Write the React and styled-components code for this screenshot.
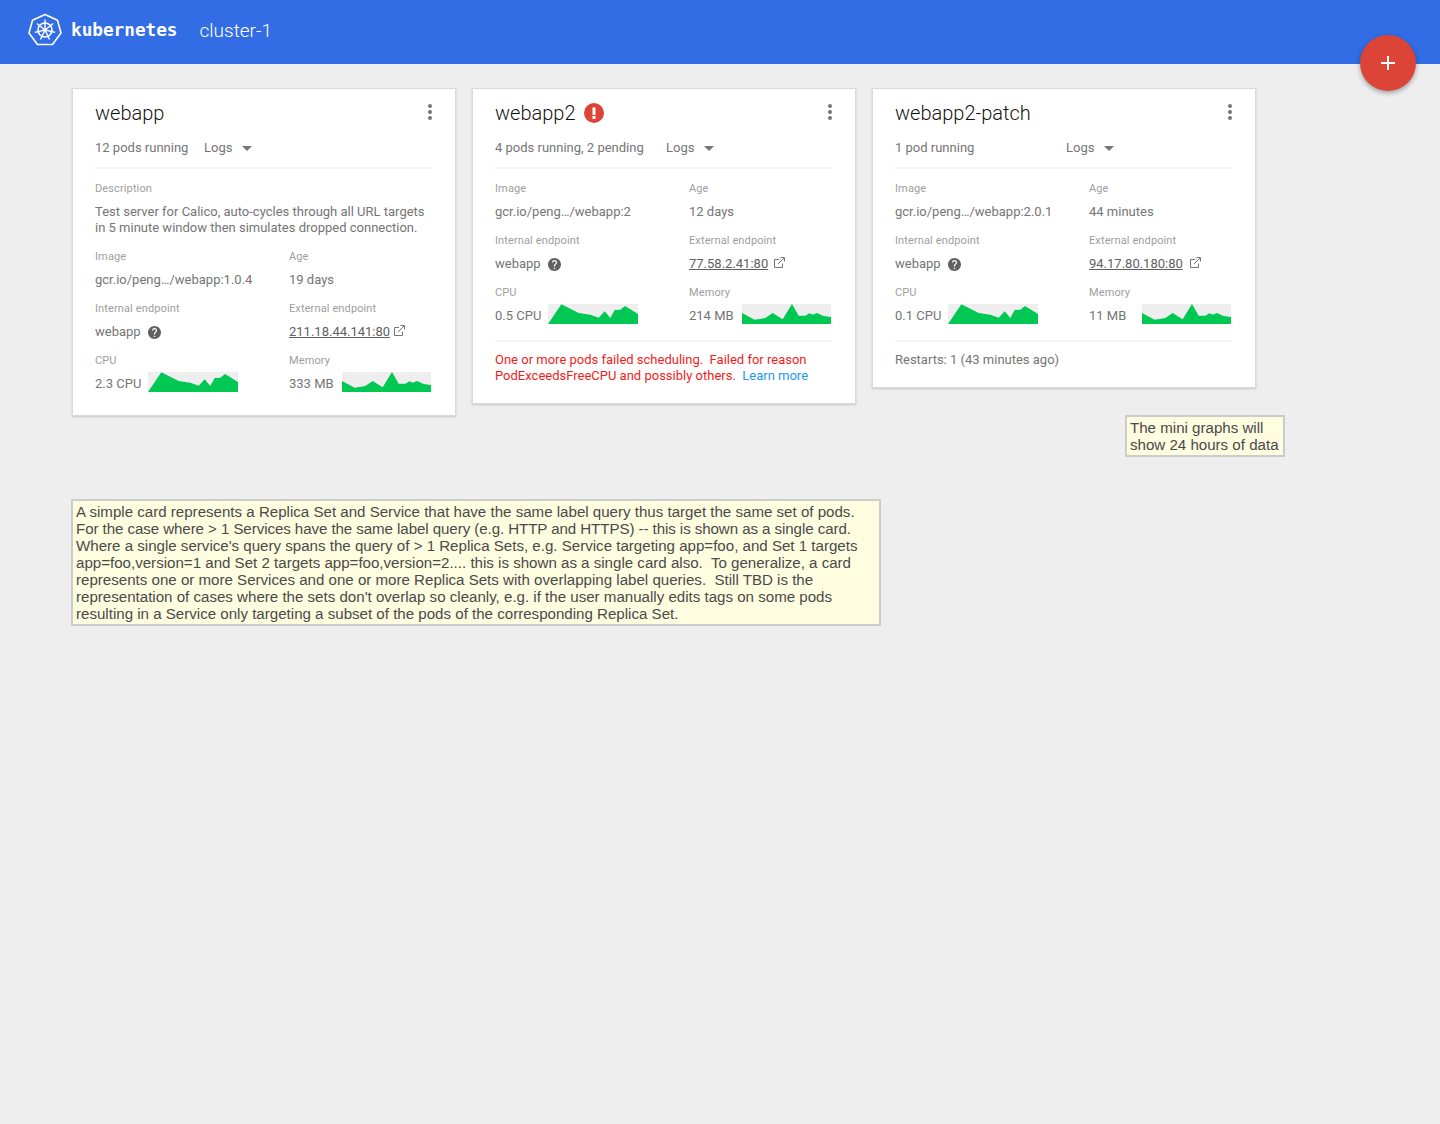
import React from "react";
import styled, { createGlobalStyle } from "styled-components";

const Global = createGlobalStyle`
  html, body { margin: 0; padding: 0; background: #eeeeee; }
  body { font-family: Roboto, "Liberation Sans", sans-serif; min-height: 1124px; }
`;

const Page = styled.div`
  position: relative;
  min-height: 1124px;
  background: #eeeeee;
`;

const TopBar = styled.header`
  box-sizing: border-box;
  height: 64px;
  background: #326de6;
  display: flex;
  align-items: center;
  padding: 0 0 4px 27px;
  color: #fff;
`;

const Brand = styled.div`
  display: flex;
  align-items: center;
  gap: 8px;
  margin-right: 22px;
  font-family: "DejaVu Sans Mono", monospace;
  font-weight: 700;
  font-size: 17.7px;
`;

const ClusterName = styled.div`
  font-size: 19px;
  font-weight: 300;
`;

const Fab = styled.button`
  position: absolute;
  top: 35px;
  left: 1360px;
  width: 56px;
  height: 56px;
  border: 0;
  padding: 0;
  border-radius: 50%;
  background: #db4437;
  box-shadow: 0 2px 5px rgba(0, 0, 0, 0.35);
  display: flex;
  align-items: center;
  justify-content: center;
`;

const Main = styled.main`
  padding: 24px 72px 0;
  display: flex;
  flex-direction: column;
  align-items: flex-start;
`;

const CardRow = styled.div`
  display: flex;
  align-items: flex-start;
  gap: 16px;
`;

const Card = styled.section`
  box-sizing: border-box;
  width: 384px;
  padding: 10px 23px ${(p) => p.$bottom}px 22px;
  background: #fff;
  border: 1px solid #dadada;
  box-shadow: 0 1px 2px rgba(0, 0, 0, 0.18);
`;

const TitleRow = styled.div`
  height: 28px;
  display: flex;
  align-items: center;
  justify-content: space-between;
`;

const TitleGroup = styled.div`
  display: flex;
  align-items: center;
  gap: 8px;
`;

const Title = styled.h2`
  margin: 0;
  font-size: 20px;
  font-weight: 300;
  color: rgba(0, 0, 0, 0.95);
`;

const Kebab = styled.svg`
  display: block;
  width: 4px;
  height: 16px;
  margin-bottom: 2px;
  fill: #757575;
`;

const StatusRow = styled.div`
  display: flex;
  align-items: center;
  height: 16px;
  margin-top: 13px;
  font-size: 13px;
  line-height: 16px;
  color: #757575;
`;

const Status = styled.span`
  width: ${(p) => p.$width}px;
  flex: none;
`;

const Arrow = styled.span`
  width: 0;
  height: 0;
  margin-left: 10px;
  border-left: 5px solid transparent;
  border-right: 5px solid transparent;
  border-top: 5px solid #757575;
`;

const Rule = styled.hr`
  margin: ${(p) => p.$top}px 0 ${(p) => p.$bottom}px;
  border: 0;
  height: 2px;
  background: #f5f5f5;
`;

const Field = styled.div`
  margin-bottom: 13px;
`;

const Grid = styled.div`
  display: grid;
  grid-template-columns: 194px 1fr;
  row-gap: 13px;
`;

const Label = styled.div`
  font-size: 11px;
  line-height: 16px;
  letter-spacing: 0.12px;
  margin-bottom: ${(p) => p.$gap ?? 7}px;
  color: #9e9e9e;
`;

const Value = styled.div`
  display: flex;
  align-items: center;
  min-height: 16px;
  font-size: 13px;
  line-height: 16px;
  color: #757575;
`;

const Paragraph = styled.div`
  font-size: 13px;
  line-height: 16px;
  color: #757575;
`;

const Endpoint = styled.a`
  color: #616161;
  text-decoration: underline;
`;

const Help = styled.svg`
  width: 13px;
  height: 13px;
  margin: 1px 0 0 7px;
  fill: #616161;
`;

const Launch = styled.svg`
  width: 12px;
  height: 12px;
  margin: -3px 0 0 ${(p) => p.$gap}px;
  fill: none;
  stroke: #757575;
  stroke-width: 1;
`;

const MetricText = styled.span`
  flex: none;
  width: 53px;
  padding-top: 3px;
`;

const Spark = styled.svg`
  display: block;
  width: ${(p) => p.$width}px;
  height: 20px;
  background: #eeeeee;
  fill: #00c853;
`;

const ErrorText = styled.div`
  font-size: 13px;
  line-height: 16px;
  color: #f31c1c;
`;

const LearnMore = styled.a`
  color: #2196f3;
`;

const Note = styled.div`
  box-sizing: border-box;
  background: #fffde0;
  border: 2px solid #cccccc;
  padding: 2px 2px 2px 3px;
  font-family: "Liberation Sans", Arial, sans-serif;
  font-size: 15.1px;
  line-height: 17px;
  color: #4a4a4a;
  white-space: pre;
`;

const SideNote = styled(Note)`
  margin: -1px 0 0 1053px;
  width: 160px;
`;

const WideNote = styled(Note)`
  margin: 42px 0 0 -1px;
  width: 810px;
`;

const TightLine = styled.span`
  letter-spacing: -0.07px;
`;

const CPU = "0,60 40,1 92,27 127,32 152,41 170,22 187,42 200,18 217,17 231,6 270,30 270,60";
const MEM = "0,27 38,47 70,42 92,27 122,46 150,0 170,35 190,35 202,28 212,32 225,27 245,36 267,39 267,60 0,60";

const Sparkline = ({ points, viewWidth, width }) => (
  <Spark $width={width} viewBox={`0 0 ${viewWidth} 60`} preserveAspectRatio="none">
    <polygon points={points} />
  </Spark>
);

const Logo = () => (
  <svg width="36" height="34" viewBox="0 0 36 34" fill="none" stroke="#fff">
    <polygon points="18,1.5 30.5,7.2 34,20 25.5,31.5 10.5,31.5 2,20 5.5,7.2" strokeWidth="1.6" strokeLinejoin="round" />
    <circle cx="18" cy="17" r="7" strokeWidth="1.6" />
    <circle cx="18" cy="17" r="1.6" fill="#fff" stroke="none" />
    {[0, 1, 2, 3, 4, 5, 6].map((i) => (
      <line key={i} x1="18" y1="17" x2="18" y2="6.5" strokeWidth="1.4" transform={`rotate(${(i * 360) / 7} 18 17)`} />
    ))}
  </svg>
);

const HelpIcon = () => (
  <Help viewBox="2 2 20 20">
    <path d="M12 2C6.48 2 2 6.48 2 12s4.48 10 10 10 10-4.48 10-10S17.52 2 12 2zm1 17h-2v-2h2v2zm2.07-7.75l-.9.92C13.45 12.9 13 13.5 13 15h-2v-.5c0-1.1.45-2.1 1.17-2.83l1.24-1.26c.37-.36.59-.86.59-1.41 0-1.1-.9-2-2-2s-2 .9-2 2H8c0-2.21 1.79-4 4-4s4 1.79 4 4c0 .88-.36 1.68-.93 2.25z" />
  </Help>
);

const LaunchIcon = ({ gap }) => (
  <Launch $gap={gap} viewBox="0 0 12 12">
    <path d="M6 2.5H1.5v8h8V6.5M5 7l6-6M7.5.5h4v4" />
  </Launch>
);

const ErrorBadge = () => (
  <svg width="20" height="20" viewBox="0 0 20 20">
    <circle cx="10" cy="10" r="10" fill="#db4437" />
    <rect x="8.5" y="4.5" width="3" height="7.5" fill="#fff" />
    <rect x="8.5" y="13" width="3" height="3" fill="#fff" />
  </svg>
);

const Details = ({ image, age, ip, linkGap, cpu, memory }) => (
  <Grid>
    <div>
      <Label>Image</Label>
      <Value>{image}</Value>
    </div>
    <div>
      <Label>Age</Label>
      <Value>{age}</Value>
    </div>
    <div>
      <Label>Internal endpoint</Label>
      <Value>webapp<HelpIcon /></Value>
    </div>
    <div>
      <Label>External endpoint</Label>
      <Value><Endpoint>{ip}</Endpoint><LaunchIcon gap={linkGap} /></Value>
    </div>
    <div>
      <Label $gap={3}>CPU</Label>
      <Value><MetricText>{cpu}</MetricText><Sparkline points={CPU} viewWidth={270} width={90} /></Value>
    </div>
    <div>
      <Label $gap={3}>Memory</Label>
      <Value><MetricText>{memory}</MetricText><Sparkline points={MEM} viewWidth={267} width={89} /></Value>
    </div>
  </Grid>
);

const CardHead = ({ name, badge, status, statusWidth }) => (
  <>
    <TitleRow>
      <TitleGroup>
        <Title>{name}</Title>
        {badge && <ErrorBadge />}
      </TitleGroup>
      <Kebab viewBox="0 0 4 16">
        <circle cx="2" cy="2" r="2" />
        <circle cx="2" cy="8" r="2" />
        <circle cx="2" cy="14" r="2" />
      </Kebab>
    </TitleRow>
    <StatusRow>
      <Status $width={statusWidth}>{status}</Status>
      Logs
      <Arrow />
    </StatusRow>
    <Rule $top={11} $bottom={12} />
  </>
);

export default function App() {
  return (
    <Page>
      <Global />
      <TopBar>
        <Brand><Logo />kubernetes</Brand>
        <ClusterName>cluster-1</ClusterName>
      </TopBar>
      <Fab aria-label="Add">
        <svg width="14" height="14" viewBox="0 0 14 14" fill="#fff">
          <rect x="6" width="2" height="14" />
          <rect y="6" width="14" height="2" />
        </svg>
      </Fab>
      <Main>
        <CardRow>
          <Card $bottom={23}>
            <CardHead name="webapp" status="12 pods running" statusWidth={109} />
            <Field>
              <Label>Description</Label>
              <Paragraph>
                Test server for Calico, auto-cycles through all URL targets
                <br />
                in 5 minute window then simulates dropped connection.
              </Paragraph>
            </Field>
            <Details image="gcr.io/peng…/webapp:1.0.4" age="19 days" ip="211.18.44.141:80" linkGap={3} cpu="2.3 CPU" memory="333 MB" />
          </Card>
          <Card $bottom={19}>
            <CardHead name="webapp2" badge status="4 pods running, 2 pending" statusWidth={171} />
            <Details image="gcr.io/peng…/webapp:2" age="12 days" ip="77.58.2.41:80" linkGap={5} cpu="0.5 CPU" memory="214 MB" />
            <Rule $top={16} $bottom={10} />
            <ErrorText>
              One or more pods failed scheduling.&nbsp; Failed for reason
              <br />
              PodExceedsFreeCPU and possibly others.&nbsp; <LearnMore>Learn more</LearnMore>
            </ErrorText>
          </Card>
          <Card $bottom={19}>
            <CardHead name="webapp2-patch" status="1 pod running" statusWidth={171} />
            <Details image="gcr.io/peng…/webapp:2.0.1" age="44 minutes" ip="94.17.80.180:80" linkGap={6} cpu="0.1 CPU" memory="11 MB" />
            <Rule $top={16} $bottom={10} />
            <Paragraph>Restarts: 1 (43 minutes ago)</Paragraph>
          </Card>
        </CardRow>
        <SideNote>{"The mini graphs will\nshow 24 hours of data"}</SideNote>
        <WideNote>
          {"A simple card represents a Replica Set and Service that have the same label query thus target the same set of pods.\n"}
          <TightLine>{"For the case where > 1 Services have the same label query (e.g. HTTP and HTTPS) -- this is shown as a single card."}</TightLine>
          {`
Where a single service's query spans the query of > 1 Replica Sets, e.g. Service targeting app=foo, and Set 1 targets
app=foo,version=1 and Set 2 targets app=foo,version=2.... this is shown as a single card also.  To generalize, a card
represents one or more Services and one or more Replica Sets with overlapping label queries.  Still TBD is the
representation of cases where the sets don't overlap so cleanly, e.g. if the user manually edits tags on some pods
resulting in a Service only targeting a subset of the pods of the corresponding Replica Set.`}
        </WideNote>
      </Main>
    </Page>
  );
}
